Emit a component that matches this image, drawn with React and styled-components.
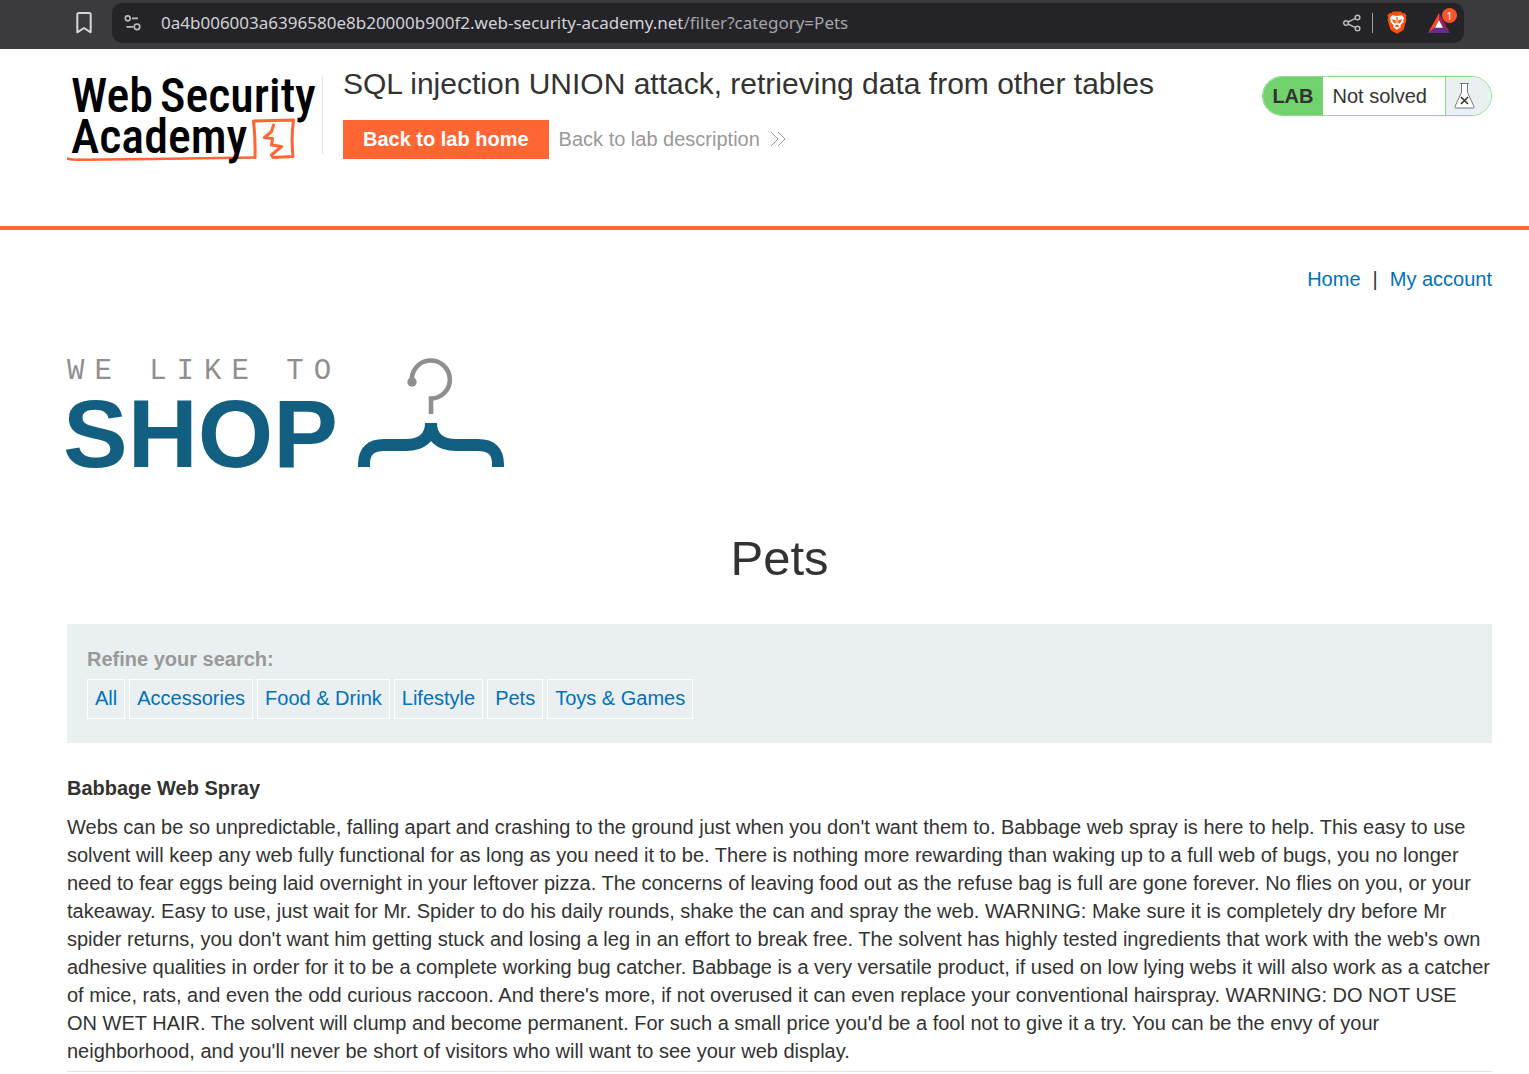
import React from "react";
import styled, { createGlobalStyle } from "styled-components";

const GlobalStyle = createGlobalStyle`
  * { box-sizing: border-box; }
  body {
    margin: 0;
    background: #fff;
    color: #333332;
    font: 20px/28px "Liberation Sans", Arial, sans-serif;
  }
  a { color: #0071bb; text-decoration: none; }
  h1, h2, h3, p { margin: 0; font-weight: 400; }
`;

const Toolbar = styled.div`
  display: flex;
  align-items: center;
  gap: 20px;
  height: 49px;
  padding: 0 65px 4px 76px;
  background: #3b3a3f;
`;

const IconButton = styled.button`
  display: flex;
  align-items: center;
  justify-content: center;
  padding: 0;
  border: 0;
  background: none;
  color: ${(p) => p.$color || "#b9b9bd"};
`;

const AddressBar = styled.div`
  flex: 1;
  display: flex;
  align-items: center;
  height: 40px;
  padding: 0 14px 0 12px;
  border-radius: 10px;
  background: #242328;
`;

const Address = styled.div`
  flex: 1;
  margin-left: 20px;
  font: 17px/24px "Noto Sans", sans-serif;
  color: #a5a5a9;
  white-space: nowrap;
  outline: none;
`;

const Domain = styled.span`
  color: #d2d2d5;
`;

const BarDivider = styled.span`
  width: 1px;
  height: 20px;
  margin: 0 14px 0 11px;
  background: #a0a0a4;
`;

const RewardsButton = styled(IconButton)`
  position: relative;
  margin-left: 21px;
`;

const Badge = styled.span`
  position: absolute;
  top: -5px;
  right: -7px;
  width: 15px;
  height: 15px;
  border-radius: 50%;
  background: #fb542b;
  color: #fff;
  font: 11px/15px "Noto Sans", sans-serif;
  text-align: center;
`;

const LabHeader = styled.header`
  display: flex;
  align-items: flex-start;
  height: 181px;
  padding: 14px 37px 0 67px;
  border-bottom: 4px solid #ff6633;
`;

const LogoLink = styled.a`
  display: block;
  margin-top: 10px;
`;

const TitleBlock = styled.div`
  flex: 1;
  display: flex;
`;

const TitleRule = styled.span`
  width: 1px;
  height: 78px;
  margin: 13px 20px 0 5px;
  background: #e5e5e5;
`;

const LabTitle = styled.h2`
  font-size: 30px;
  line-height: 42px;
`;

const Actions = styled.div`
  display: flex;
  align-items: flex-start;
  gap: 10px;
  margin-top: 15px;
`;

const HomeButton = styled.a`
  padding: 5px 20px 6px;
  background: #ff6633;
  color: #fff;
  font-weight: 700;
`;

const DescriptionLink = styled.a`
  display: flex;
  align-items: center;
  gap: 10px;
  padding: 5px 0 6px;
  color: #999;
`;

const Status = styled.div`
  display: flex;
  height: 40px;
  margin-top: 13px;
  border: 1px solid #8fdc8f;
  border-radius: 20px;
  overflow: hidden;
  line-height: 38px;
`;

const StatusTag = styled.span`
  padding: 0 9px;
  background: #72d36e;
  font-weight: 700;
`;

const StatusText = styled.span`
  padding: 0 18px 0 10px;
`;

const StatusIcon = styled.span`
  display: flex;
  align-items: center;
  width: 46px;
  padding-left: 8px;
  border-left: 1px solid #8fdc8f;
  background: #eaeff2;
`;

const Page = styled.main`
  padding: 35px 37px 0 67px;
`;

const TopNav = styled.nav`
  display: flex;
  justify-content: flex-end;
  gap: 12px;
`;

const ShopLogo = styled.div`
  display: flex;
  margin: 62px 0 0 -6px;
`;

const CategoryTitle = styled.h1`
  margin-top: 52px;
  font-size: 49px;
  line-height: 70px;
  text-align: center;
`;

const Filters = styled.section`
  margin-top: 31px;
  padding: 21px 20px 24px;
  background: #eaeff2;
`;

const FilterLabel = styled.h3`
  margin-bottom: 6px;
  color: #999;
  font-size: 20px;
  font-weight: 700;
`;

const FilterList = styled.div`
  display: flex;
  gap: 4px;
`;

const FilterLink = styled.a`
  padding: 4px 7px 6px;
  border: 1px solid #fff;
`;

const Product = styled.article`
  margin-top: 31px;
  padding-bottom: 6px;
  border-bottom: 1px solid #e5e5e5;
`;

const ProductName = styled.h3`
  margin-bottom: 11px;
  font-size: 20px;
  font-weight: 700;
`;

const categories = ["All", "Accessories", "Food & Drink", "Lifestyle", "Pets", "Toys & Games"];

function BookmarkIcon() {
  return (
    <svg width="16" height="22" viewBox="0 0 16 22" fill="none" stroke="currentColor" strokeWidth="2" strokeLinejoin="round">
      <path d="M3 1h10.200q1.500 0 1.500 1.500V20.300L8 16 1.300 20.300V2.500Q1.300 1 3 1Z" />
    </svg>
  );
}

function TuneIcon() {
  return (
    <svg width="17" height="16" viewBox="0 0 17 16" fill="none" stroke="currentColor" strokeWidth="1.700">
      <circle cx="3.800" cy="3.300" r="2.500" />
      <path d="M8 3.300h6M2.500 11.800H9" />
      <circle cx="13" cy="11.800" r="2.800" />
    </svg>
  );
}

function ShareIcon() {
  return (
    <svg width="18" height="18" viewBox="0 0 18 18" fill="none" stroke="currentColor" strokeWidth="1.500">
      <circle cx="3" cy="9" r="2.300" />
      <circle cx="14.500" cy="3.500" r="2.300" />
      <circle cx="14.500" cy="14.500" r="2.300" />
      <path d="M5 8l7.500-3.600M5 10l7.500 3.600" />
    </svg>
  );
}

function BraveIcon() {
  return (
    <svg width="20" height="23" viewBox="0 0 20 23">
      <path fill="#fb4f0b" d="M6 .5h8l1.600 1.800 2-.3 2 2.600-.8 2 .7 2-2.600 9.200q-.4 1.200-1.500 2L10 22.800l-5.400-3q-1.100-.8-1.500-2L.5 8.600l.7-2-.8-2 2-2.600 2 .3z" />
      <path fill="#fff" d="M5 4.300l5 .7 5-.7 2 2.700-.8 2.200.6 1.500-3.500 3.500.7 1.800-1.400.8L10 19l-2.600-2.200-1.400-.8.700-1.800-3.500-3.500.6-1.500L3 7z" />
      <path fill="#fb4f0b" d="M4.800 8.300l3.700.6.4 2.600-1.500 1.200zM15.200 8.300l-3.700.6-.4 2.600 1.500 1.200zM9.300 6h1.400l-.3 6.500h-.8zM7.500 15.200l2.500-1.600 2.500 1.600L10 16.200z" />
    </svg>
  );
}

function RewardsIcon() {
  return (
    <svg width="22" height="20" viewBox="0 0 22 20">
      <path fill="#ff4724" d="M11 0v7L7 14.500 0 20z" />
      <path fill="#9e1f63" d="M11 0l11 20-7-5.500L11 7z" />
      <path fill="#662d91" d="M0 20l7-5.500h8L22 20z" />
      <path fill="#fff" d="M11 7l4 7.700H7z" />
    </svg>
  );
}

function AcademyLogo() {
  return (
    <svg width="250" height="92" viewBox="0 0 250 92" role="img" aria-label="Web Security Academy" fontFamily="Roboto Condensed, Roboto, sans-serif" fontSize="48" fontWeight="500" fill="#000">
      <g fill="none" stroke="#ff6633" strokeLinecap="round" strokeLinejoin="round">
        <path strokeWidth="2.500" d="M0 85.500q5 1.500 14 1.200L85 86l103-1.500" />
        <path strokeWidth="3" d="M188 84.500Q188.500 65 186.500 48L226.500 47Q224 65 226 83.500L206 84.500 204.500 82 214.500 73.500 204.500 72 205.500 65.500 197.500 64.500 204.500 58.500 206.500 52" />
      </g>
      <text x="4" y="39">Web</text>
      <text x="93" y="39">Security</text>
      <text x="4" y="80">Academy</text>
    </svg>
  );
}

function HangerLogo() {
  return (
    <svg width="446" height="116" viewBox="-6 0 446 116" role="img" aria-label="We like to shop">
      <text x="0" y="24" fill="#8f8f8f" fontFamily="Liberation Mono, monospace" fontSize="29" letterSpacing="10">WE LIKE TO</text>
      <text x="-4" y="112" fill="#125f82" fontFamily="Liberation Sans, sans-serif" fontWeight="700" fontSize="97">SHOP</text>
      <circle cx="345" cy="27" r="4.700" fill="#8f8f8f" />
      <path fill="none" stroke="#8f8f8f" strokeWidth="4.600" d="M345 27A19 19 0 1 1 364 43.500V59" />
      <path fill="none" stroke="#125f82" strokeWidth="12" d="M297 112v-3q0-19 20-19h22c16 0 25-8 25-22" />
      <path fill="none" stroke="#125f82" strokeWidth="12" d="M431 112v-3q0-19-20-19h-22c-16 0-25-8-25-22" />
    </svg>
  );
}

function Chevrons() {
  return (
    <svg width="16" height="16" viewBox="0 0 16 16" fill="none" stroke="#999" strokeWidth="1">
      <path d="M1 1l7 7-7 7M8 1l7 7-7 7" />
    </svg>
  );
}

function Flask() {
  return (
    <svg width="22" height="28" viewBox="0 0 22 28" stroke="#777" strokeWidth="1">
      <path fill="#fff" d="M7.500 1.500v9L1 24.500q-.4 1.500 1 1.500h17q1.400 0 1-1.500L13.500 10.500v-9z" />
      <path d="M6 1.500h9" />
      <path stroke="#333" strokeWidth="1.600" d="M7 15l7 7M14 15l-7 7" />
    </svg>
  );
}

export default function App() {
  return (
    <>
      <GlobalStyle />
      <Toolbar>
        <IconButton aria-label="Bookmark" $color="#d5d5d8"><BookmarkIcon /></IconButton>
        <AddressBar>
          <IconButton aria-label="Site settings"><TuneIcon /></IconButton>
          <Address role="textbox" aria-label="Address" contentEditable suppressContentEditableWarning spellCheck={false}>
            <Domain>0a4b006003a6396580e8b20000b900f2.web-security-academy.net</Domain>/filter?category=Pets
          </Address>
          <IconButton aria-label="Share"><ShareIcon /></IconButton>
          <BarDivider />
          <IconButton aria-label="Shields"><BraveIcon /></IconButton>
          <RewardsButton aria-label="Rewards"><RewardsIcon /><Badge>1</Badge></RewardsButton>
        </AddressBar>
      </Toolbar>

      <LabHeader>
        <LogoLink href="#academy"><AcademyLogo /></LogoLink>
        <TitleBlock>
          <TitleRule />
          <div>
            <LabTitle>SQL injection UNION attack, retrieving data from other tables</LabTitle>
            <Actions>
              <HomeButton href="#lab">Back to lab home</HomeButton>
              <DescriptionLink href="#description">Back to lab description <Chevrons /></DescriptionLink>
            </Actions>
          </div>
        </TitleBlock>
        <Status>
          <StatusTag>LAB</StatusTag>
          <StatusText>Not solved</StatusText>
          <StatusIcon><Flask /></StatusIcon>
        </Status>
      </LabHeader>

      <Page>
        <TopNav>
          <a href="#home">Home</a>
          <span>|</span>
          <a href="#account">My account</a>
        </TopNav>
        <ShopLogo><HangerLogo /></ShopLogo>
        <CategoryTitle>Pets</CategoryTitle>
        <Filters>
          <FilterLabel>Refine your search:</FilterLabel>
          <FilterList>
            {categories.map((name) => (
              <FilterLink key={name} href={"#" + encodeURIComponent(name)}>{name}</FilterLink>
            ))}
          </FilterList>
        </Filters>
        <Product>
          <ProductName>Babbage Web Spray</ProductName>
          <p>
            Webs can be so unpredictable, falling apart and crashing to the ground just when you don't want them to.
            Babbage web spray is here to help. This easy to use solvent will keep any web fully functional for as long
            as you need it to be. There is nothing more rewarding than waking up to a full web of bugs, you no longer
            need to fear eggs being laid overnight in your leftover pizza. The concerns of leaving food out as the
            refuse bag is full are gone forever. No flies on you, or your takeaway. Easy to use, just wait for Mr.
            Spider to do his daily rounds, shake the can and spray the web. WARNING: Make sure it is completely dry
            before Mr spider returns, you don't want him getting stuck and losing a leg in an effort to break free. The
            solvent has highly tested ingredients that work with the web's own adhesive qualities in order for it to be
            a complete working bug catcher. Babbage is a very versatile product, if used on low lying webs it will also
            work as a catcher of mice, rats, and even the odd curious raccoon. And there's more, if not overused it can
            even replace your conventional hairspray. WARNING: DO NOT USE ON WET HAIR. The solvent will clump and
            become permanent. For such a small price you'd be a fool not to give it a try. You can be the envy of your
            neighborhood, and you'll never be short of visitors who will want to see your web display.
          </p>
        </Product>
      </Page>
    </>
  );
}
